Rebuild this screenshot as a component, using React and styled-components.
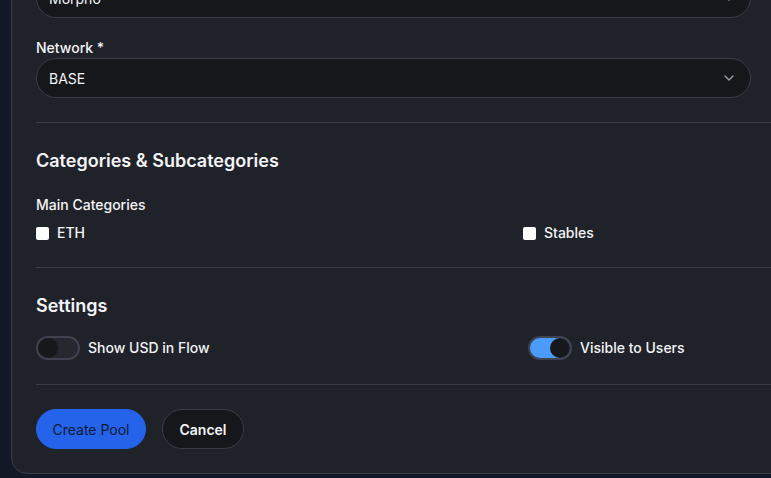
import React from 'react'
import styled, { createGlobalStyle } from 'styled-components';
import { ChevronDown } from 'lucide-react';

const GlobalStyle = createGlobalStyle`
html, body {
  margin: 0;
  padding: 0;
  background: #121826;
  overflow: hidden;
  font-family: Inter, "Liberation Sans", sans-serif;
  color: #f3f4f6;
}
`;

const Page = styled.div`
width: 100%;
padding-left: 11px;
box-sizing: border-box;
`;

const Card = styled.div`
width: 980px;
margin-top: -67px;
background: #20222a;
border: 1px solid #3b3e48;
border-radius: 16px;
padding: 24px;
box-sizing: border-box;
display: flex;
flex-direction: column;
`;

const Fields = styled.div`
display: flex;
flex-direction: column;
gap: 20px;
padding-bottom: 24px;
`;

const Field = styled.div`
display: flex;
flex-direction: column;
`;

const Label = styled.div`
font-size: 14px;
line-height: 20px;
font-weight: 500;
color: #f3f4f6;
`;

const SelectBox = styled.div`
width: 715px;
height: 40px;
box-sizing: border-box;
display: flex;
align-items: center;
justify-content: space-between;
padding: 0 13px 0 12px;
background: #16171b;
border: 1px solid #3b3e48;
border-radius: 20px;
font-size: 14px;
color: #f3f4f6;
svg { color: #9ca3af; }
`;

const Section = styled.div`
border-top: 1px solid #3b3e48;
padding: 24px 0;
display: flex;
flex-direction: column;
`;

const Heading = styled.h3`
margin: 0 0 ${p => p.$gap}px;
font-size: 18px;
line-height: 28px;
font-weight: 600;
color: #f3f4f6;
`;

const Grid = styled.div`
display: grid;
grid-template-columns: ${p => p.$col}px 1fr;
margin-top: ${p => p.$top || 0}px;
`;

const Option = styled.label`
display: flex;
align-items: center;
gap: 8px;
font-size: 14px;
line-height: 20px;
font-weight: 500;
color: #f3f4f6;
`;

const Box = styled.span`
width: 13px;
height: 13px;
background: #ffffff;
border-radius: 2px;
`;

const Track = styled.span`
width: 44px;
height: 24px;
box-sizing: border-box;
border-radius: 12px;
border: 2px solid #3f4350;
background: ${p => p.$on ? '#4b9bfa' : '#262830'};
display: flex;
align-items: center;
justify-content: ${p => p.$on ? 'flex-end' : 'flex-start'};
`;

const Knob = styled.span`
width: 20px;
height: 20px;
border-radius: 50%;
background: #17181c;
`;

const Actions = styled.div`
border-top: 1px solid #3b3e48;
padding-top: 24px;
display: flex;
gap: 16px;
`;

const Button = styled.button`
height: 40px;
padding: 0 ${p => p.$primary ? 15.5 : 16.5}px;
border-radius: 20px;
font-family: Inter, "Liberation Sans", sans-serif;
font-size: 14px;
font-weight: ${p => p.$primary ? 400 : 600};
background: ${p => p.$primary ? '#2563eb' : '#16171b'};
color: ${p => p.$primary ? '#0f1a33' : '#f3f4f6'};
border: 1px solid ${p => p.$primary ? '#2563eb' : '#3b3e48'};
`;

const Toggle = ({ on, children }) => (
    <Option>
        <Track $on={on}><Knob /></Track>
        {children}
    </Option>
)

const Check = ({ children }) => (
    <Option>
        <Box />
        {children}
    </Option>
)

const App = () => {
    return (
        <Page>
            <GlobalStyle />
            <Card>
                <Fields>
                    <Field>
                        <Label>Protocol *</Label>
                        <SelectBox>Morpho<ChevronDown size={16} /></SelectBox>
                    </Field>
                    <Field>
                        <Label>Network *</Label>
                        <SelectBox>BASE<ChevronDown size={16} /></SelectBox>
                    </Field>
                </Fields>
                <Section>
                    <Heading $gap={20}>Categories &amp; Subcategories</Heading>
                    <Label>Main Categories</Label>
                    <Grid $col={487} $top={8}>
                        <Check>ETH</Check>
                        <Check>Stables</Check>
                    </Grid>
                </Section>
                <Section>
                    <Heading $gap={16}>Settings</Heading>
                    <Grid $col={492}>
                        <Toggle>Show USD in Flow</Toggle>
                        <Toggle on>Visible to Users</Toggle>
                    </Grid>
                </Section>
                <Actions>
                    <Button $primary>Create Pool</Button>
                    <Button>Cancel</Button>
                </Actions>
            </Card>
        </Page>
    )
}

export default App
